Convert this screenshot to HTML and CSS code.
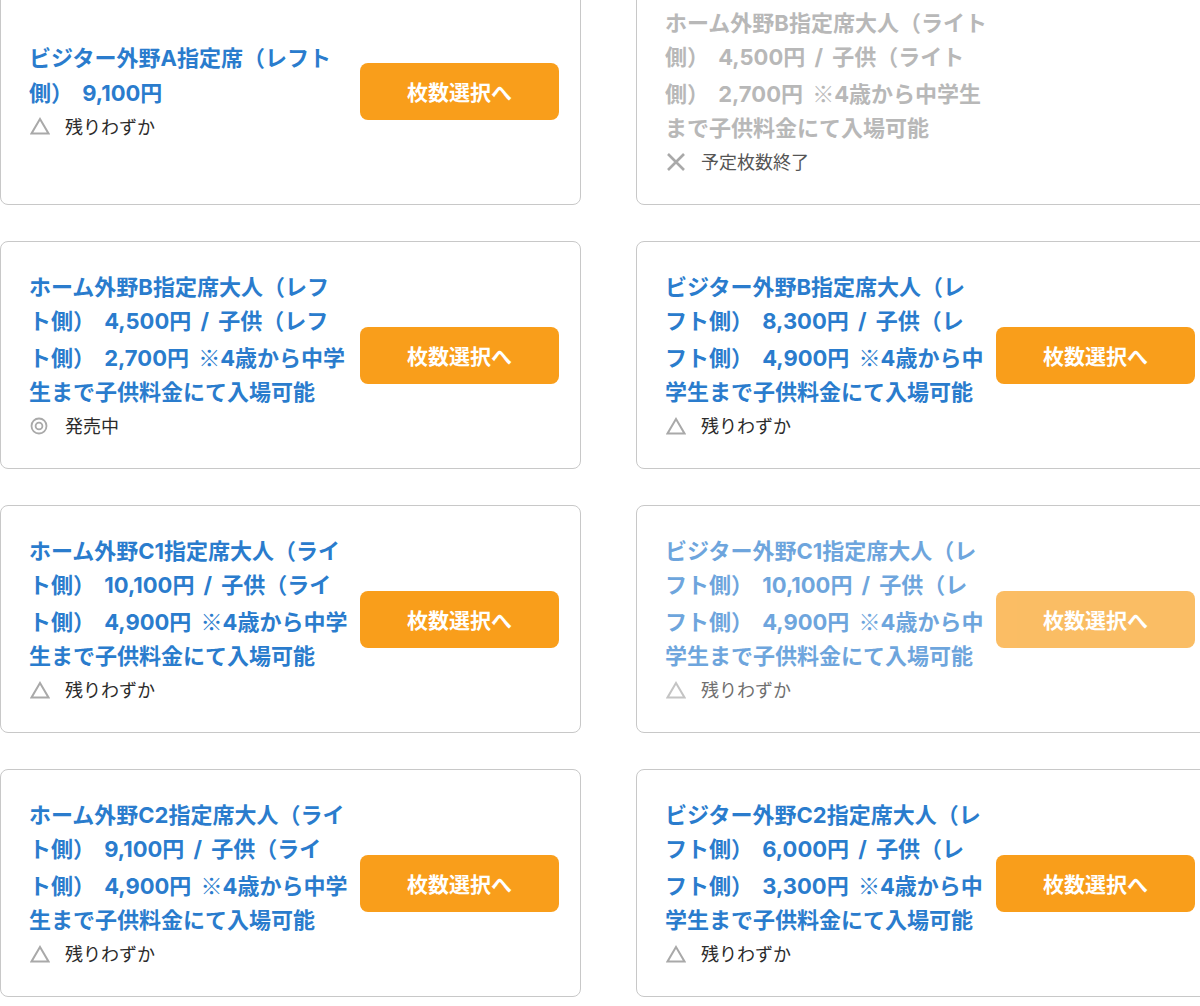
FILE: index.html
```html
<!DOCTYPE html>
<html lang="ja">
<head>
<meta charset="utf-8">
<title>チケット選択</title>
<link rel="stylesheet" href="styles.css">
</head>
<body>
<div class="seat-list">

  <div class="seat-card">
    <div class="seat-info">
      <p class="seat-name">ビジター外野A指定席（レフト<br>側） 9,100円</p>
      <p class="seat-status"><span class="st-icon"><svg viewBox="0 0 20 18" width="20" height="18"><path d="M10 2 L18.5 16.5 H1.5 Z" fill="none" stroke="#a9a9a9" stroke-width="2"/></svg></span>残りわずか</p>
    </div>
    <a class="seat-btn" href="#">枚数選択へ</a>
  </div>

  <div class="seat-card is-soldout">
    <div class="seat-info">
      <p class="seat-name">ホーム外野B指定席大人（ライト<br>側） 4,500円 / 子供（ライト<br>側） 2,700円 <span class="cjk">※</span>4歳から中学生<br>まで子供料金にて入場可能</p>
      <p class="seat-status"><span class="st-icon"><svg viewBox="0 0 20 18" width="20" height="18"><path d="M2 1 L18 17 M18 1 L2 17" fill="none" stroke="#a9a9a9" stroke-width="2.6"/></svg></span>予定枚数終了</p>
    </div>
  </div>

  <div class="seat-card">
    <div class="seat-info">
      <p class="seat-name">ホーム外野B指定席大人（レフ<br>ト側） 4,500円 / 子供（レフ<br>ト側） 2,700円 <span class="cjk">※</span>4歳から中学<br>生まで子供料金にて入場可能</p>
      <p class="seat-status"><span class="st-icon"><svg viewBox="0 0 20 20" width="20" height="20"><circle cx="9" cy="10" r="7.5" fill="none" stroke="#a9a9a9" stroke-width="1.8"/><circle cx="9" cy="10" r="3.4" fill="none" stroke="#a9a9a9" stroke-width="1.8"/></svg></span>発売中</p>
    </div>
    <a class="seat-btn" href="#">枚数選択へ</a>
  </div>

  <div class="seat-card">
    <div class="seat-info">
      <p class="seat-name">ビジター外野B指定席大人（レ<br>フト側） 8,300円 / 子供（レ<br>フト側） 4,900円 <span class="cjk">※</span>4歳から中<br>学生まで子供料金にて入場可能</p>
      <p class="seat-status"><span class="st-icon"><svg viewBox="0 0 20 18" width="20" height="18"><path d="M10 2 L18.5 16.5 H1.5 Z" fill="none" stroke="#a9a9a9" stroke-width="2"/></svg></span>残りわずか</p>
    </div>
    <a class="seat-btn" href="#">枚数選択へ</a>
  </div>

  <div class="seat-card">
    <div class="seat-info">
      <p class="seat-name">ホーム外野C1指定席大人（ライ<br>ト側） 10,100円 / 子供（ライ<br>ト側） 4,900円 <span class="cjk">※</span>4歳から中学<br>生まで子供料金にて入場可能</p>
      <p class="seat-status"><span class="st-icon"><svg viewBox="0 0 20 18" width="20" height="18"><path d="M10 2 L18.5 16.5 H1.5 Z" fill="none" stroke="#a9a9a9" stroke-width="2"/></svg></span>残りわずか</p>
    </div>
    <a class="seat-btn" href="#">枚数選択へ</a>
  </div>

  <div class="seat-card is-faded">
    <div class="seat-info">
      <p class="seat-name">ビジター外野C1指定席大人（レ<br>フト側） 10,100円 / 子供（レ<br>フト側） 4,900円 <span class="cjk">※</span>4歳から中<br>学生まで子供料金にて入場可能</p>
      <p class="seat-status"><span class="st-icon"><svg viewBox="0 0 20 18" width="20" height="18"><path d="M10 2 L18.5 16.5 H1.5 Z" fill="none" stroke="#a9a9a9" stroke-width="2"/></svg></span>残りわずか</p>
    </div>
    <a class="seat-btn" href="#">枚数選択へ</a>
  </div>

  <div class="seat-card">
    <div class="seat-info">
      <p class="seat-name">ホーム外野C2指定席大人（ライ<br>ト側） 9,100円 / 子供（ライ<br>ト側） 4,900円 <span class="cjk">※</span>4歳から中学<br>生まで子供料金にて入場可能</p>
      <p class="seat-status"><span class="st-icon"><svg viewBox="0 0 20 18" width="20" height="18"><path d="M10 2 L18.5 16.5 H1.5 Z" fill="none" stroke="#a9a9a9" stroke-width="2"/></svg></span>残りわずか</p>
    </div>
    <a class="seat-btn" href="#">枚数選択へ</a>
  </div>

  <div class="seat-card">
    <div class="seat-info">
      <p class="seat-name">ビジター外野C2指定席大人（レ<br>フト側） 6,000円 / 子供（レ<br>フト側） 3,300円 <span class="cjk">※</span>4歳から中<br>学生まで子供料金にて入場可能</p>
      <p class="seat-status"><span class="st-icon"><svg viewBox="0 0 20 18" width="20" height="18"><path d="M10 2 L18.5 16.5 H1.5 Z" fill="none" stroke="#a9a9a9" stroke-width="2"/></svg></span>残りわずか</p>
    </div>
    <a class="seat-btn" href="#">枚数選択へ</a>
  </div>

</div>
</body>
</html>
```

FILE: styles.css
```css
html, body {
  margin: 0;
  padding: 0;
  background: #ffffff;
  overflow: hidden;
}

body {
  font-family: "Inter", "Noto Sans CJK JP", sans-serif;
  color: #333333;
}

.seat-list {
  display: grid;
  grid-template-columns: 581px 581px;
  column-gap: 55px;
  row-gap: 36px;
  margin-top: -23px;
  width: 1217px;
}

.seat-card {
  box-sizing: border-box;
  height: 228px;
  border: 1px solid #c8c8c8;
  border-radius: 8px;
  display: flex;
  align-items: center;
  padding: 0 21px 0 28px;
  background: #fff;
}

.seat-info {
  width: 330px;
  flex: none;
  padding-top: 2px;
}

.seat-name {
  margin: 0;
  font-size: 22px;
  line-height: 34.3px;
  font-weight: bold;
  color: #2a7ccd;
  white-space: nowrap;
  word-spacing: 4px;
}

.cjk {
  font-family: "Noto Sans CJK JP", sans-serif;
  font-weight: normal;
}

.seat-status {
  margin: 0;
  display: flex;
  align-items: center;
  font-family: "Noto Sans CJK JP", sans-serif;
  font-size: 18px;
  line-height: 33px;
  color: #2b2b2b;
}

.st-icon {
  width: 20px;
  margin-right: 15px;
  margin-left: 1px;
  display: flex;
  align-items: center;
}

.seat-btn {
  margin-left: auto;
  width: 199px;
  height: 57px;
  border-radius: 8px;
  background: #f99e1b;
  color: #ffffff;
  font-size: 21px;
  font-weight: bold;
  text-decoration: none;
  display: flex;
  align-items: center;
  justify-content: center;
}

.is-soldout .seat-name {
  color: #b8b8b8;
}

.is-soldout .seat-status {
  color: #555555;
}

.is-faded .seat-info,
.is-faded .seat-btn {
  opacity: 0.68;
}
```
